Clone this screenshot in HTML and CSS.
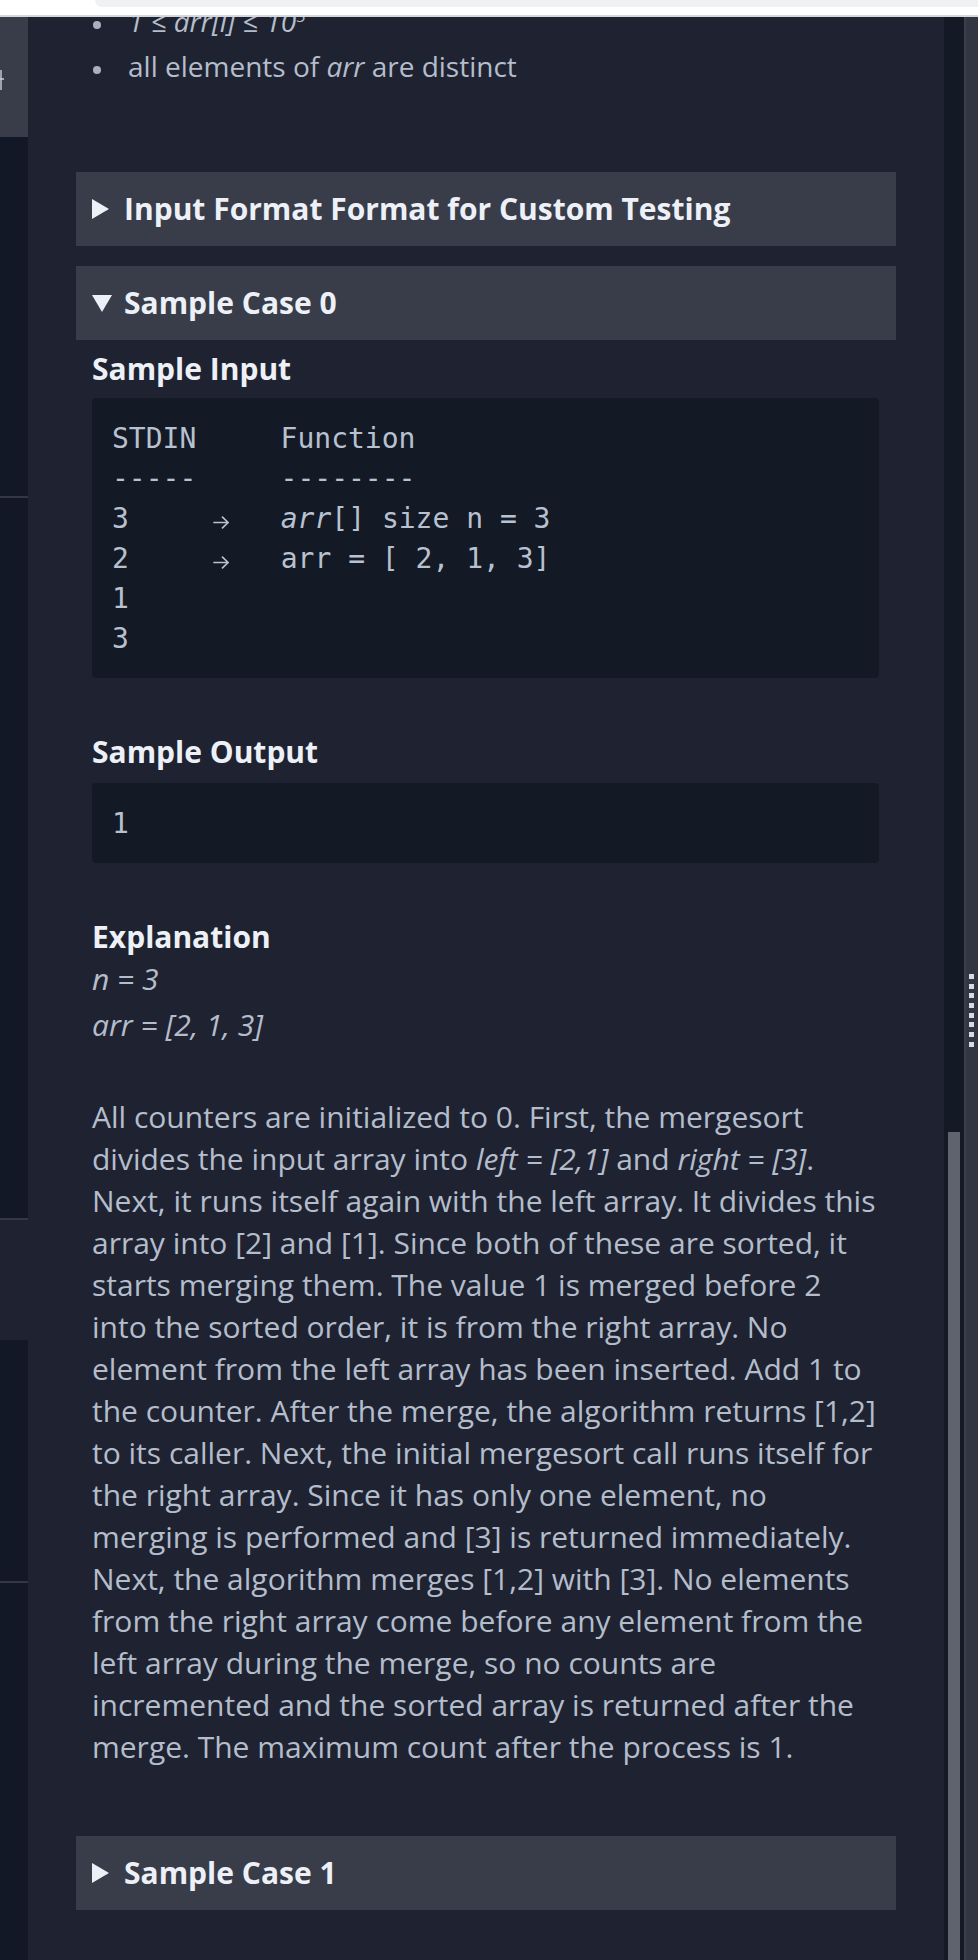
FILE: index.html
```html
<!DOCTYPE html>
<html lang="en">
<head>
<meta charset="utf-8">
<title>Sample Case 0</title>
<link rel="stylesheet" href="styles.css">
</head>
<body>
<div class="chrome"><div class="urlbar"></div></div>
<div class="app">
  <nav class="leftnav">
    <div class="nav-tab"><svg class="nav-glyph" width="4" height="20" viewBox="0 0 4 20"><path d="M1 0v20M0 9h4" stroke="#c9ced8" stroke-width="1.4" fill="none"/></svg></div>
    <div class="nav-sec nav-a"></div>
    <div class="nav-sec nav-b"></div>
    <div class="nav-sec nav-c"></div>
    <div class="nav-sec nav-d"></div>
    <div class="nav-sec nav-e"></div>
  </nav>
  <main class="main">
    <div class="desc">
      <ul class="constraints">
        <li><em>1 ≤ arr[i] ≤ 10<sup>5</sup></em></li>
        <li>all elements of <em>arr</em> are distinct</li>
      </ul>
    </div>

    <section class="panel">
      <div class="panel-head">
        <svg class="tri-right" width="17" height="20" viewBox="0 0 17 20"><polygon points="0,0 17,10 0,20" fill="#edf1f7"/></svg>
        <span>Input Format Format for Custom Testing</span>
      </div>
    </section>

    <section class="panel open">
      <div class="panel-head">
        <svg class="tri-down" width="20" height="17" viewBox="0 0 20 17"><polygon points="0,0 20,0 10,17" fill="#edf1f7"/></svg>
        <span>Sample Case 0</span>
      </div>
    </section>
    <div class="panel-body">
      <h4 class="sub first">Sample Input</h4>
      <pre class="code">STDIN     Function
-----     --------
3     <svg class="arrow" width="17" height="13" viewBox="0 0 17 13"><path d="M1 6.5h14.2M9.5 1.2l5.6 5.3-5.6 5.3" stroke="#b8c1cf" stroke-width="1.7" fill="none" stroke-linecap="round" stroke-linejoin="round"/></svg>   <em>arr</em>[] size n = 3
2     <svg class="arrow" width="17" height="13" viewBox="0 0 17 13"><path d="M1 6.5h14.2M9.5 1.2l5.6 5.3-5.6 5.3" stroke="#b8c1cf" stroke-width="1.7" fill="none" stroke-linecap="round" stroke-linejoin="round"/></svg>   arr = [ 2, 1, 3]
1
3</pre>
      <h4 class="sub">Sample Output</h4>
      <pre class="code">1</pre>
      <h4 class="sub">Explanation</h4>
      <div class="explain-vars">
        <div class="var"><em>n = 3</em></div>
        <div class="var var2"><em>arr = [2, 1, 3]</em></div>
      </div>
      <p class="explain">All counters are initialized to 0. First, the mergesort divides the input array into <em>left = [2,1]</em> and <em>right = [3]</em>. Next, it runs itself again with the left array. It divides this array into [2] and [1]. Since both of these are sorted, it starts merging them. The value 1 is merged before 2 into the sorted order, it is from the right array. No element from the left array has been inserted. Add 1 to the counter. After the merge, the algorithm returns [1,2] to its caller. Next, the initial mergesort call runs itself for the right array. Since it has only one element, no merging is performed and [3] is returned immediately. Next, the algorithm merges [1,2] with [3]. No elements from the right array come before any element from the left array during the merge, so no counts are incremented and the sorted array is returned after the merge. The maximum count after the process is 1.</p>
    </div>

    <section class="panel last">
      <div class="panel-head">
        <svg class="tri-right" width="17" height="20" viewBox="0 0 17 20"><polygon points="0,0 17,10 0,20" fill="#edf1f7"/></svg>
        <span>Sample Case 1</span>
      </div>
    </section>
  </main>
  <div class="track"><div class="thumb"></div></div>
  <div class="splitter">
    <div class="grip">
      <i></i><i></i><i></i><i></i><i></i><i></i><i></i><i></i>
    </div>
  </div>
</div>
</body>
</html>
```

FILE: styles.css
```css
* { box-sizing: border-box; }

html, body {
  margin: 0;
  padding: 0;
  height: 1960px;
  overflow: hidden;
  background: #1f2331;
}

body {
  font-family: "Open Sans", "Noto Sans", sans-serif;
}

.chrome {
  height: 17px;
  background: #ffffff;
  border-bottom: 2px solid #d5d7da;
}

.urlbar {
  margin-left: 95px;
  height: 7px;
  background: #f0f1f3;
  border-bottom-left-radius: 10px;
}

.app {
  display: flex;
  height: 1943px;
  overflow: hidden;
}

/* left navigation strip */
.leftnav {
  width: 28px;
  flex: none;
  display: flex;
  flex-direction: column;
  background: #131826;
}

.nav-tab {
  height: 120px;
  background: #393d4a;
  padding-top: 53px;
}

.nav-glyph { display: block; }

.nav-sec { flex: none; }
.nav-a { height: 359px; }
.nav-b { height: 722px; border-top: 2px solid #343845; }
.nav-c { height: 122px; border-top: 2px solid #343845; background: #1f2331; }
.nav-d { height: 241px; }
.nav-e { flex: 1; border-top: 2px solid #343845; }

/* main content */
.main {
  flex: 1;
  min-width: 0;
  background: #1f2331;
  padding: 0 48px;
  color: #b4bdcc;
  font-size: 30px;
  line-height: 42px;
}

.desc {
  padding: 0 16px;
}

.constraints {
  margin: -17px 0 85px;
  padding-left: 36px;
  list-style: none;
  font-size: 28px;
}

.constraints li + li {
  margin-top: 3px;
}

.constraints li::before {
  content: "";
  display: inline-block;
  width: 8px;
  height: 8px;
  margin: 0 27px 0 -35px;
  border-radius: 50%;
  background: #a9b1bf;
  vertical-align: middle;
}

sup {
  font-size: 17px;
  line-height: 0;
  vertical-align: 10px;
}

.panel {
  background: #393d4a;
}

.panel + .panel { margin-top: 20px; }

.panel.last { margin-top: 68px; }

.panel-head {
  display: flex;
  align-items: center;
  height: 74px;
  padding: 0 16px;
  color: #edf1f7;
  font-weight: 700;
  font-size: 30px;
  line-height: 42px;
}

.tri-right { margin-right: 15px; flex: none; }
.tri-down { margin-right: 12px; flex: none; }

.panel-body {
  padding: 0 17px 0 16px;
}

.sub {
  margin: 52px 0 10px;
  color: #edf1f7;
  font-weight: 700;
  font-size: 30px;
  line-height: 42px;
}

.sub.first { margin-top: 8px; margin-bottom: 8px; }

.code {
  margin: 0;
  padding: 21px 20px 19px;
  background: #141926;
  border-radius: 4px;
  font-family: "DejaVu Sans Mono", "Liberation Mono", monospace;
  font-size: 28px;
  line-height: 40px;
  color: #b8c1cf;
}

.arrow {
  vertical-align: -1px;
}

.code + .sub { margin-top: 53px; }

.explain-vars {
  margin-top: -10px;
}

.explain-vars em,
.explain em {
  font-style: italic;
}

.var2 { margin-top: 4px; }

.explain {
  margin: 50px 0 0;
}

/* scrollbar track */
.track {
  width: 20px;
  flex: none;
  background: #141926;
  display: flex;
  flex-direction: column;
  padding: 1115px 4px 0;
}

.thumb {
  flex: 1;
  background: #5f636e;
}

/* splitter */
.splitter {
  width: 14px;
  flex: none;
  background: #323642;
  border-left: 2px solid #3b3f4b;
  padding: 957px 0 0 3px;
}

.grip {
  display: flex;
  flex-direction: column;
  gap: 4.7px;
}

.grip i {
  display: block;
  width: 5px;
  height: 5px;
  background: #d5dbe6;
}
```
